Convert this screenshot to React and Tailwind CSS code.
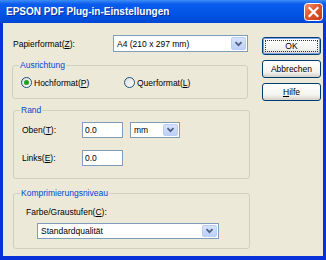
import React from "react";

function Arrow() {
  return (
    <svg width="9" height="6" viewBox="0 0 9 6">
      <path d="M1.5 1.2 L4.5 4.2 L7.5 1.2" fill="none" stroke="#4D6185" strokeWidth="1.8" />
    </svg>
  );
}

function CloseIcon() {
  return (
    <svg width="19" height="18" viewBox="0 0 19 18" className="block shrink-0">
      <defs>
        <linearGradient id="cg" x1="0" y1="0" x2="1" y2="1">
          <stop offset="0" stopColor="#F39476" />
          <stop offset="0.45" stopColor="#E2552D" />
          <stop offset="1" stopColor="#C43A16" />
        </linearGradient>
      </defs>
      <rect x="0.5" y="0.5" width="18" height="17" rx="3" fill="url(#cg)" stroke="#FFFFFF" />
      <path d="M5.5 5 L13.5 13 M13.5 5 L5.5 13" stroke="#FFFFFF" strokeWidth="2.2" strokeLinecap="square" />
    </svg>
  );
}

function Combo({ className, text }) {
  return (
    <div className={`flex items-stretch bg-white border border-[#7F9DB9] ${className}`}>
      <span className="flex-1 flex items-center pl-[3px] whitespace-nowrap overflow-hidden">{text}</span>
      <span className="w-[15px] m-[1px] rounded-[2px] border border-[#B9CDF7] bg-[linear-gradient(to_bottom,#D7E3FD,#BCD0FA)] flex items-center justify-center">
        <Arrow />
      </span>
    </div>
  );
}

function Field({ text }) {
  return (
    <div className="w-[41px] h-[16px] bg-white border border-[#7F9DB9] flex items-center pl-[2px]">{text}</div>
  );
}

function Radio({ checked, children, className = "" }) {
  return (
    <div className={`flex items-center h-[13px] ${className}`}>
      <span className="w-[11px] h-[11px] rounded-full border border-[#1C5180] bg-[linear-gradient(135deg,#DCDCD7,#FFFFFF)] flex items-center justify-center">
        {checked && <span className="w-[5px] h-[5px] rounded-full bg-[#21A121]" />}
      </span>
      <span className="ml-[2px]">{children}</span>
    </div>
  );
}

function Btn({ children, isDefault }) {
  return (
    <div
      className={`w-[59px] h-[18px] rounded-[3px] border border-[#003C74] bg-[linear-gradient(to_bottom,#FFFFFF,#F3F3EF_70%,#D6D0C5)] flex items-center justify-center ${
        isDefault ? "shadow-[inset_0_0_0_1px_#7EA0E8]" : ""
      }`}
    >
      {isDefault ? (
        <span className="w-[53px] h-[12px] border border-dotted border-[#333] flex items-center justify-center">
          {children}
        </span>
      ) : (
        children
      )}
    </div>
  );
}

export default function App() {
  return (
    <div className="w-[326px] h-[260px] flex flex-col bg-[#0831D9] font-['Liberation_Sans',Arial,sans-serif] text-[8.5px] leading-[10px] text-black">
      <div className="h-[23px] shrink-0 flex items-center pl-[6px] pr-[3px] bg-[linear-gradient(to_bottom,#3D8DF5,#0A5CEE_18%,#0054E3_65%,#0046D5)]">
        <span className="flex-1 text-white font-bold text-[10px] leading-[12px] [text-shadow:1px_1px_0_#0B2C9A]">
          EPSON PDF Plug-in-Einstellungen
        </span>
        <CloseIcon />
      </div>
      <div className="flex-1 flex mx-[3px] mb-[4px] bg-[#ECE9D8] pl-[10px] pt-[12px]">
        <div className="w-[237px] flex flex-col">
          <div className="flex items-center h-[17px]">
            <span className="w-[100px]">
              Papierformat(<u>Z</u>):
            </span>
            <Combo className="w-[135px] h-[17px]" text="A4 (210 x 297 mm)" />
          </div>

          <fieldset className="mt-[8px] -ml-[1px] w-[236px] border border-[#D0D0BF] rounded-[3px] pt-[6px] pb-[9px]">
            <legend className="ml-[6px] px-[1px] text-[#0046D5]">Ausrichtung</legend>
            <div className="flex pl-[8px]">
              <Radio checked className="w-[103px]">
                Hochformat(<u>P</u>)
              </Radio>
              <Radio>
                Querformat(<u>L</u>)
              </Radio>
            </div>
          </fieldset>

          <fieldset className="mt-[6px] w-[237px] border border-[#D0D0BF] rounded-[3px] pt-[7px] pb-[12px]">
            <legend className="ml-[6px] px-[1px] text-[#0046D5]">Rand</legend>
            <div className="flex flex-col gap-[12px] pl-[8px]">
              <div className="flex items-center">
                <span className="w-[60px]">
                  Oben(<u>T</u>):
                </span>
                <Field text="0.0" />
                <Combo className="ml-[7px] w-[50px] h-[16px]" text="mm" />
              </div>
              <div className="flex items-center">
                <span className="w-[60px]">
                  Links(<u>E</u>):
                </span>
                <Field text="0.0" />
              </div>
            </div>
          </fieldset>

          <fieldset className="mt-[9px] w-[237px] border border-[#D0D0BF] rounded-[3px] pt-[9px] pb-[9px]">
            <legend className="ml-[6px] px-[1px] text-[#0046D5]">Komprimierungsniveau</legend>
            <div className="pl-[12px]">
              Farbe/Graustufen(<u>C</u>):
            </div>
            <div className="pl-[23px] mt-[6px]">
              <Combo className="w-[182px] h-[16px]" text="Standardqualität" />
            </div>
          </fieldset>
        </div>

        <div className="ml-[12px] mt-[2px] flex flex-col gap-[5px]">
          <Btn isDefault>OK</Btn>
          <Btn>Abbrechen</Btn>
          <Btn>
            <span>
              <u>H</u>ilfe
            </span>
          </Btn>
        </div>
      </div>
    </div>
  );
}
